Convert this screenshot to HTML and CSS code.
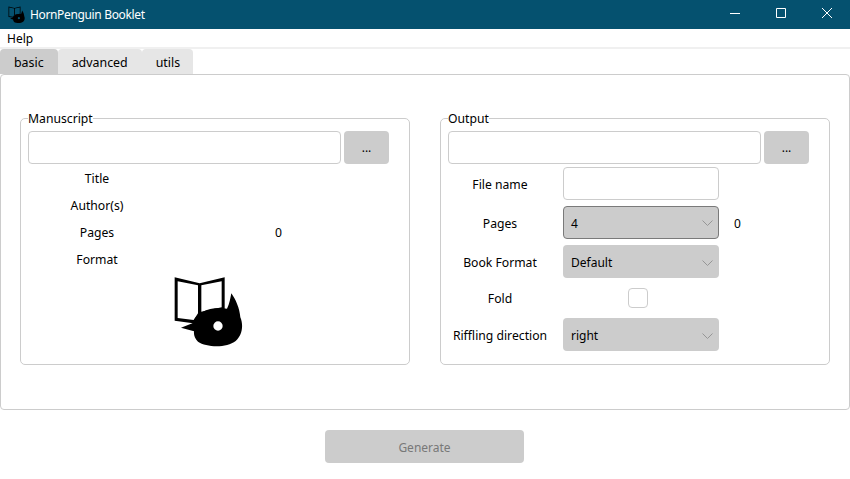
FILE: index.html
```html
<!DOCTYPE html>
<html lang="en">
<head>
    <meta charset="UTF-8">
    <meta name="viewport" content="width=device-width, initial-scale=1.0">
    <title>HornPenguin Booklet</title>
    <link rel="stylesheet" href="styles.css">
</head>
<body>
<svg class="defs" width="0" height="0">
    <symbol id="logo" viewBox="70 45 210 225">
        <path d="M75 52 L150 70 L225 52 L225 150 L150 165 L130 190 L75 182 Z M84 64 L84 174 L132 180 L145 160 L145 76 Z M155 76 L155 155 L216 142 L216 64 Z" fill-rule="evenodd"/>
        <path d="M94 203 L128 190 C140 155 185 138 232 146 C240 130 242 115 245 100 C258 118 270 145 272 172 C282 195 278 225 258 243 C230 265 170 262 145 245 C135 235 132 225 133 214 Z M205 184 A14 14 0 1 0 205 212 A14 14 0 1 0 205 184 Z" fill-rule="evenodd"/>
    </symbol>
</svg>

<header class="titlebar">
    <svg class="app-icon"><use href="#logo"/></svg>
    <span class="app-name">HornPenguin Booklet</span>
    <div class="win-controls">
        <svg class="win-btn" viewBox="0 0 46 29"><path d="M18 13.5h10" stroke="#fff" fill="none"/></svg>
        <svg class="win-btn" viewBox="0 0 46 29"><path d="M18.5 8.5h9v9h-9z" stroke="#fff" fill="none"/></svg>
        <svg class="win-btn" viewBox="0 0 46 29"><path d="M18 8l10 10M28 8l-10 10" stroke="#fff" fill="none"/></svg>
    </div>
</header>

<nav class="menubar"><span>Help</span></nav>

<div class="tabs">
    <div class="tab active">basic</div>
    <div class="tab">advanced</div>
    <div class="tab">utils</div>
</div>

<main class="pane">
    <fieldset class="group">
        <legend>Manuscript</legend>
        <div class="path-row">
            <input type="text" class="field path-input">
            <button class="btn browse">...</button>
        </div>
        <div class="info">
            <div class="info-label">Title</div><div class="info-value"></div>
            <div class="info-label">Author(s)</div><div class="info-value"></div>
            <div class="info-label">Pages</div><div class="info-value">0</div>
            <div class="info-label">Format</div><div class="info-value"></div>
        </div>
        <div class="logo-wrap"><svg class="logo"><use href="#logo"/></svg></div>
    </fieldset>

    <fieldset class="group">
        <legend>Output</legend>
        <div class="path-row">
            <input type="text" class="field path-input">
            <button class="btn browse">...</button>
        </div>
        <div class="options">
            <label class="opt-label">File name</label>
            <input type="text" class="field opt-input">
            <span></span>

            <label class="opt-label">Pages</label>
            <div class="select focused"><span>4</span><svg class="chevron" viewBox="0 0 11 6"><path d="M.5 .5l5 5 5-5"/></svg></div>
            <span class="count">0</span>

            <label class="opt-label">Book Format</label>
            <div class="select"><span>Default</span><svg class="chevron" viewBox="0 0 11 6"><path d="M.5 .5l5 5 5-5"/></svg></div>
            <span></span>

            <label class="opt-label tight">Fold</label>
            <div class="check-cell"><span class="check"></span></div>
            <span></span>

            <label class="opt-label">Riffling direction</label>
            <div class="select"><span>right</span><svg class="chevron" viewBox="0 0 11 6"><path d="M.5 .5l5 5 5-5"/></svg></div>
            <span></span>
        </div>
    </fieldset>
</main>

<div class="footer">
    <button class="btn generate" disabled>Generate</button>
</div>
</body>
</html>
```

FILE: styles.css
```css
* {
    box-sizing: border-box;
}
body {
    margin: 0;
    width: 850px;
    height: 479px;
    overflow: hidden;
    background: #fff;
    color: #000;
    font-family: "Noto Sans", "Open Sans", sans-serif;
    font-size: 12px;
}
.defs {
    position: absolute;
}
.titlebar {
    display: flex;
    align-items: center;
    height: 29px;
    padding-left: 8px;
    background: #05516f;
    color: #fff;
}
.app-icon {
    width: 17px;
    height: 18px;
    margin-right: 5px;
}
.app-name {
    flex: 1;
    letter-spacing: -0.35px;
}
.win-controls {
    display: flex;
}
.win-btn {
    width: 46px;
    height: 29px;
}
.menubar {
    height: 20px;
    padding-left: 7px;
    line-height: 19px;
    border-bottom: 2px solid #f0f0f0;
}
.tabs {
    display: flex;
    height: 25px;
}
.tab {
    padding: 0 14px;
    font-size: 12.4px;
    line-height: 27px;
    background: #e6e6e6;
    border-radius: 4px 4px 0 0;
}
.tab:last-child {
    padding-right: 13px;
}
.tab.active {
    background: #cccccc;
}
.pane {
    display: flex;
    gap: 30px;
    height: 336px;
    padding: 34px 19px 0;
    border: 1px solid #cccccc;
    border-radius: 4px;
}
.group {
    flex: 1;
    height: 256px;
    margin: 0;
    padding: 4px 7px 0;
    border: 1px solid #cccccc;
    border-radius: 5px;
    min-width: 0;
}
.group legend {
    position: relative;
    top: 1px;
    padding: 0;
    font-size: 12.2px;
    line-height: 18px;
}
.path-row {
    display: flex;
    gap: 3px;
}
.field {
    display: block;
    background: #fff;
    border: 1px solid #cccccc;
    border-radius: 4px;
    outline: none;
}
.path-input {
    width: 313px;
    height: 33px;
}
.btn {
    border: none;
    border-radius: 4px;
    background: #cccccc;
    color: #000;
    font: inherit;
}
.browse {
    width: 45px;
    height: 33px;
    padding: 0;
}
.info {
    display: grid;
    grid-template-columns: 138px 225px;
    grid-auto-rows: 27px;
    margin: 1px 0 2px;
    align-items: center;
    font-size: 12.2px;
    text-align: center;
}
.logo-wrap {
    display: flex;
    justify-content: center;
    padding-right: 15px;
}
.logo {
    width: 70px;
    height: 75px;
}
.options {
    display: grid;
    grid-template-columns: 104px 156px auto;
    column-gap: 11px;
    row-gap: 6px;
    margin-top: 3px;
    align-items: center;
}
.opt-label {
    padding-top: 2px;
    font-size: 12.2px;
    text-align: center;
}
.opt-label.tight {
    padding-top: 0;
}
.opt-input {
    width: 156px;
    height: 33px;
}
.select {
    display: flex;
    align-items: center;
    justify-content: space-between;
    height: 33px;
    padding: 2px 6px 0 8px;
    background: #cccccc;
    border-radius: 4px;
}
.select.focused {
    border: 1px solid #7a7a7a;
    padding: 1px 5px 0 7px;
}
.chevron {
    width: 11px;
    height: 6px;
}
.chevron path {
    fill: none;
    stroke: #969696;
}
.count {
    margin-left: 4px;
    padding-top: 2px;
}
.check-cell {
    display: flex;
    justify-content: center;
    padding: 4px 6px 4px 0;
}
.check {
    width: 20px;
    height: 20px;
    background: #fff;
    border: 1px solid #cccccc;
    border-radius: 4px;
}
.footer {
    display: flex;
    justify-content: center;
    padding: 20px 1px 0 0;
}
.generate {
    width: 199px;
    height: 33px;
    padding-top: 2px;
    color: #787878;
}
```
